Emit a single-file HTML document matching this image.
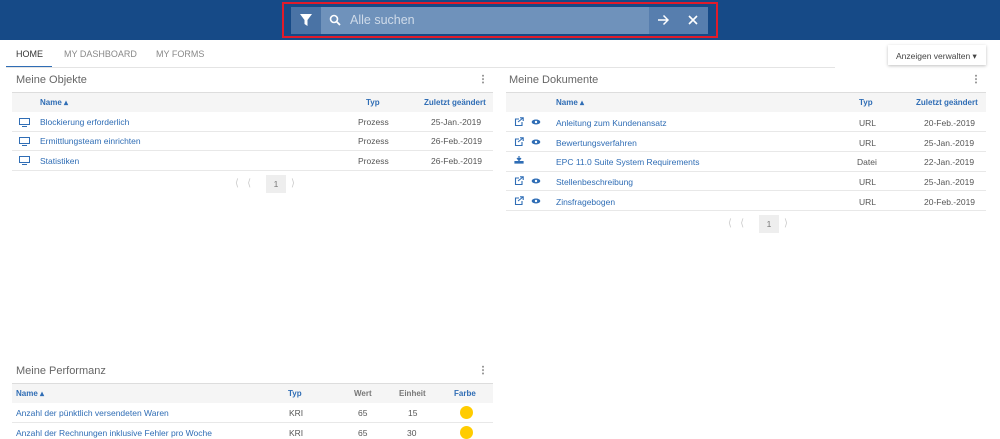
<!DOCTYPE html>
<html><head><meta charset="utf-8"><style>
*{margin:0;padding:0;box-sizing:border-box}
body{width:1000px;height:437px;overflow:hidden;background:#fff;font-family:"Liberation Sans",sans-serif;font-size:8.5px;color:#555;position:relative}
.a{position:absolute}
.t{transform:translateY(1px)}
.hdr{left:0;top:0;width:1000px;height:40px;background:#164a87}
.blue{color:#2f6db5}
.title{font-size:11px;color:#666}
.th{background:#f5f5f5;border-top:1px solid #ddd}
.row{border-bottom:1px solid #e8e8e8}
.hb{color:#2f6db5;font-weight:bold;font-size:8px}
.dots{width:2px;height:10px;background:radial-gradient(circle,#999 0.9px,transparent 1.1px) 0 0/2px 3.4px}
.dot{width:13px;height:13px;border-radius:50%;background:#fc0}
</style></head><body>
<div class="a hdr"></div>
<div class="a" style="left:282px;top:2px;width:436px;height:36px;border:2px solid #e01b2a"></div>
<div class="a" style="left:291px;top:7px;width:30px;height:27px;background:#4a73a5"></div>
<div class="a" style="left:321px;top:7px;width:328px;height:27px;background:#6f92bb"></div>
<div class="a" style="left:649px;top:7px;width:59px;height:27px;background:#577eae"></div>
<svg class="a" style="left:299px;top:13px" width="14" height="14" viewBox="0 0 14 14"><path d="M1 1h12L8.5 7v6l-3-2V7z" fill="#fff"/></svg>
<svg class="a" style="left:329px;top:14px" width="12" height="12" viewBox="0 0 12 12"><circle cx="5" cy="5" r="3.5" fill="none" stroke="#fff" stroke-width="1.6"/><path d="M7.5 7.5l3.5 3.5" stroke="#fff" stroke-width="1.8"/></svg>
<div class="a" style="left:350px;top:13px;font-size:12.5px;color:#cfdbe9">Alle suchen</div>
<svg class="a" style="left:657px;top:14px" width="12" height="12" viewBox="0 0 12 12"><path d="M1 6h10M6.5 1.5L11 6l-4.5 4.5" fill="none" stroke="#fff" stroke-width="1.5"/></svg>
<svg class="a" style="left:688px;top:15px" width="10" height="10" viewBox="0 0 10 10"><path d="M1 1l8 8M9 1l-8 8" stroke="#fff" stroke-width="1.6"/></svg>

<div class="a" style="left:16px;top:49px;font-size:9px;color:#333">HOME</div>
<div class="a" style="left:64px;top:49px;font-size:9px;color:#888">MY DASHBOARD</div>
<div class="a" style="left:156px;top:49px;font-size:9px;color:#888">MY FORMS</div>
<div class="a" style="left:6px;top:66px;width:46px;height:2px;background:#2f6db5"></div>
<div class="a" style="left:6px;top:67px;width:829px;height:1px;background:#e4e4e4"></div>
<div class="a" style="left:888px;top:45px;width:98px;height:20px;background:#fff;box-shadow:0 1px 3px rgba(0,0,0,.25);font-size:8.5px;color:#444;padding:6px 0 0 8px">Anzeigen verwalten ▾</div>

<div class="t">
<!-- Left panel -->
<div class="a title" style="left:16px;top:73px">Meine Objekte</div>
<div class="a dots" style="left:482px;top:73px"></div>
<div class="a th" style="left:12px;top:91px;width:481px;height:20px"></div>
<div class="a hb" style="left:40px;top:97px">Name ▴</div>
<div class="a hb" style="left:366px;top:97px">Typ</div>
<div class="a hb" style="left:424px;top:97px">Zuletzt geändert</div>
<div class="a row" style="left:12px;top:111px;width:481px;height:20px"></div>
<div class="a row" style="left:12px;top:131px;width:481px;height:19px"></div>
<div class="a row" style="left:12px;top:150px;width:481px;height:20px"></div>
<div class="a blue" style="left:40px;top:116px">Blockierung erforderlich</div>
<div class="a blue" style="left:40px;top:135px">Ermittlungsteam einrichten</div>
<div class="a blue" style="left:40px;top:155px">Statistiken</div>
<div class="a" style="left:358px;top:116px">Prozess</div><div class="a" style="left:431px;top:116px">25-Jan.-2019</div>
<div class="a" style="left:358px;top:135px">Prozess</div><div class="a" style="left:431px;top:135px">26-Feb.-2019</div>
<div class="a" style="left:358px;top:155px">Prozess</div><div class="a" style="left:431px;top:155px">26-Feb.-2019</div>
<svg class="a" style="left:19px;top:117px" width="11" height="9"><rect x=".5" y=".5" width="10" height="6" fill="none" stroke="#2f6db5"/><path d="M3 8.5h5" stroke="#2f6db5"/></svg>
<svg class="a" style="left:19px;top:136px" width="11" height="9"><rect x=".5" y=".5" width="10" height="6" fill="none" stroke="#2f6db5"/><path d="M3 8.5h5" stroke="#2f6db5"/></svg>
<svg class="a" style="left:19px;top:155px" width="11" height="9"><rect x=".5" y=".5" width="10" height="6" fill="none" stroke="#2f6db5"/><path d="M3 8.5h5" stroke="#2f6db5"/></svg>
<div class="a" style="left:235px;top:177px;color:#ccc;font-size:10px">⟨ &nbsp; ⟨</div>
<div class="a" style="left:266px;top:174px;width:20px;height:18px;background:#eee;color:#777;text-align:center;padding-top:4px">1</div>
<div class="a" style="left:291px;top:177px;color:#ccc;font-size:10px">⟩</div>

<!-- Right panel -->
<div class="a title" style="left:509px;top:73px">Meine Dokumente</div>
<div class="a dots" style="left:975px;top:73px"></div>
<div class="a th" style="left:506px;top:91px;width:480px;height:20px"></div>
<div class="a hb" style="left:556px;top:97px">Name ▴</div>
<div class="a hb" style="left:859px;top:97px">Typ</div>
<div class="a hb" style="left:916px;top:97px">Zuletzt geändert</div>
<div class="a row" style="left:506px;top:111px;width:480px;height:20px"></div>
<div class="a row" style="left:506px;top:131px;width:480px;height:20px"></div>
<div class="a row" style="left:506px;top:151px;width:480px;height:20px"></div>
<div class="a row" style="left:506px;top:171px;width:480px;height:19px"></div>
<div class="a row" style="left:506px;top:190px;width:480px;height:20px"></div>
<div class="a blue" style="left:556px;top:117px">Anleitung zum Kundenansatz</div>
<div class="a blue" style="left:556px;top:137px">Bewertungsverfahren</div>
<div class="a blue" style="left:556px;top:156px">EPC 11.0 Suite System Requirements</div>
<div class="a blue" style="left:556px;top:176px">Stellenbeschreibung</div>
<div class="a blue" style="left:556px;top:196px">Zinsfragebogen</div>
<div class="a" style="left:859px;top:117px">URL</div><div class="a" style="left:924px;top:117px">20-Feb.-2019</div>
<div class="a" style="left:859px;top:137px">URL</div><div class="a" style="left:924px;top:137px">25-Jan.-2019</div>
<div class="a" style="left:857px;top:156px">Datei</div><div class="a" style="left:924px;top:156px">22-Jan.-2019</div>
<div class="a" style="left:859px;top:176px">URL</div><div class="a" style="left:924px;top:176px">25-Jan.-2019</div>
<div class="a" style="left:859px;top:196px">URL</div><div class="a" style="left:924px;top:196px">20-Feb.-2019</div>
<svg class="a" style="left:514px;top:116px" width="30" height="90" viewBox="0 0 30 90">
<g id="r" fill="none" stroke="#2f6db5" stroke-width="1.1"><path d="M5 2H1.5v6.5H8V5M4 5l5-4M6 .8h3.2V4"/><ellipse cx="22" cy="5" rx="4.3" ry="2.5" fill="#2f6db5" stroke="none"/><circle cx="22" cy="5" r="1.2" fill="#fff" stroke="none"/></g>
<use href="#r" y="20"/><use href="#r" y="59"/><use href="#r" y="79"/>
<path d="M5 39v4M3 41l2 2.5 2-2.5M1 44v2h8v-2" fill="#2f6db5" stroke="#2f6db5" stroke-width="1.2"/>
</svg>
<div class="a" style="left:728px;top:217px;color:#ccc;font-size:10px">⟨ &nbsp; ⟨</div>
<div class="a" style="left:759px;top:214px;width:20px;height:18px;background:#eee;color:#777;text-align:center;padding-top:4px">1</div>
<div class="a" style="left:784px;top:217px;color:#ccc;font-size:10px">⟩</div>

<!-- Performanz -->
<div class="a title" style="left:16px;top:364px">Meine Performanz</div>
<div class="a dots" style="left:482px;top:364px"></div>
<div class="a th" style="left:12px;top:382px;width:481px;height:20px"></div>
<div class="a hb" style="left:16px;top:388px">Name ▴</div>
<div class="a hb" style="left:288px;top:388px">Typ</div>
<div class="a" style="left:354px;top:388px;font-size:8px;font-weight:bold;color:#777">Wert</div>
<div class="a" style="left:399px;top:388px;font-size:8px;font-weight:bold;color:#777">Einheit</div>
<div class="a hb" style="left:454px;top:388px">Farbe</div>
<div class="a row" style="left:12px;top:402px;width:481px;height:20px"></div>
<div class="a blue" style="left:16px;top:407px">Anzahl der pünktlich versendeten Waren</div>
<div class="a blue" style="left:16px;top:427px">Anzahl der Rechnungen inklusive Fehler pro Woche</div>
<div class="a" style="left:289px;top:407px">KRI</div><div class="a" style="left:358px;top:407px">65</div><div class="a" style="left:408px;top:407px">15</div>
<div class="a" style="left:289px;top:427px">KRI</div><div class="a" style="left:358px;top:427px">65</div><div class="a" style="left:407px;top:427px">30</div>
<div class="a dot" style="left:460px;top:405px"></div>
<div class="a dot" style="left:460px;top:425px"></div>
</div>
</body></html>
